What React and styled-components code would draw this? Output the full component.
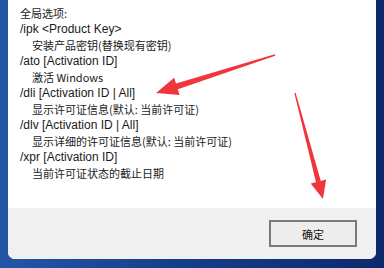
import React from "react";
import styled, { createGlobalStyle } from "styled-components";

const lines = [
  { kind: "title", text: "全局选项:" },
  { kind: "cmd", text: "/ipk <Product Key>" },
  { kind: "desc", text: "安装产品密钥(替换现有密钥)" },
  { kind: "cmd", text: "/ato [Activation ID]" },
  { kind: "desc", text: "激活 Windows" },
  { kind: "cmd", text: "/dli [Activation ID | All]" },
  { kind: "desc", text: "显示许可证信息(默认: 当前许可证)" },
  { kind: "cmd", text: "/dlv [Activation ID | All]" },
  { kind: "desc", text: "显示详细的许可证信息(默认: 当前许可证)" },
  { kind: "cmd", text: "/xpr [Activation ID]" },
  { kind: "desc", text: "当前许可证状态的截止日期" },
];

const App = () => {
  return (
    <Page>
      <GlobalStyle />
      <Dialog>
        <Content>
          {lines.map((l, i) => (
            <Line key={i} kind={l.kind}>
              {l.text}
            </Line>
          ))}
        </Content>
        <Footer>
          <OkButton>确定</OkButton>
        </Footer>
      </Dialog>
      <Arrows viewBox="0 0 384 268" width="384" height="268">
        <polygon points="274.8,54.2 176,83.4 174.2,77.7 156,93 179.6,94.9 177.8,89.2 275.2,55.8" />
        <polygon points="295.6,92.8 320.8,181 326.1,179.6 323,199 310.7,183.6 316,182.2 294.4,93.2" />
      </Arrows>
    </Page>
  );
};

export default App;

const GlobalStyle = createGlobalStyle`
  html, body {
    margin: 0;
    padding: 0;
    width: 384px;
    height: 268px;
    overflow: hidden;
  }
`;

const Page = styled.div`
  position: relative;
  width: 384px;
  height: 268px;
  box-sizing: border-box;
  padding: 0 8px 9px 8px;
  display: flex;
  flex-direction: column;
  background: linear-gradient(90deg, #2356a6 0%, #163f8a 45%, #0a2a6c 100%);
`;

const Dialog = styled.div`
  flex: 1;
  display: flex;
  flex-direction: column;
  background: #ffffff;
  border-radius: 0 0 7px 7px;
  overflow: hidden;
`;

const Content = styled.div`
  flex: 1;
  padding: 5px 0 0 12px;
  color: #1a1a1a;
`;

const Line = styled.div`
  height: 16px;
  line-height: 16px;
  white-space: nowrap;
  padding-left: ${(p) => (p.kind === "desc" ? "12px" : "0")};
  font-family: ${(p) =>
    p.kind === "cmd"
      ? `"Liberation Sans", "Noto Sans CJK SC", sans-serif`
      : `"Noto Sans CJK SC", sans-serif`};
  font-size: ${(p) => (p.kind === "cmd" ? "12px" : "11px")};
`;

const Footer = styled.div`
  height: 51px;
  background: #f0f0f0;
  display: flex;
  align-items: center;
  justify-content: flex-end;
  padding-right: 19px;
`;

const OkButton = styled.button`
  width: 88px;
  height: 27px;
  box-sizing: border-box;
  border: 2px solid #7a7a7a;
  background: #ededed;
  color: #111;
  font-family: "Noto Sans CJK SC", sans-serif;
  font-size: 11px;
  padding: 0;
`;

const Arrows = styled.svg`
  position: absolute;
  left: 0;
  top: 0;
  pointer-events: none;
  fill: #f0353b;
`;
